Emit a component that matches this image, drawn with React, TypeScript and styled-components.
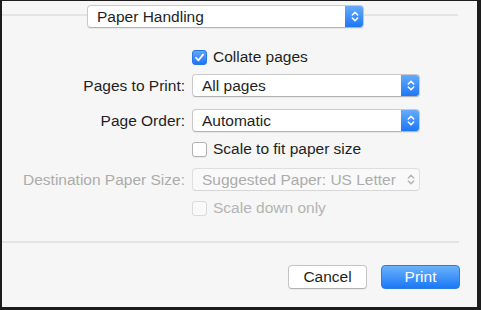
import React from "react";
import styled, { createGlobalStyle, css } from "styled-components";

const GlobalStyle = createGlobalStyle`
  html, body { margin: 0; padding: 0; background: #f6f6f6; }
  body { font-family: "Liberation Sans", Arial, sans-serif; }
`;

const Frame = styled.div`
  width: 481px;
  height: 310px;
  box-sizing: border-box;
  border-style: solid;
  border-color: #1c1c1c;
  border-width: 1px 4px 3px 2px;
  background: #f6f6f6;
  display: flex;
  flex-direction: column;
  font-size: 15.5px;
  color: #1f1f1f;
  overflow: hidden;
`;

const Header = styled.div`
  display: flex;
  align-items: flex-start;
  margin-top: 4px;
  padding-right: 19px;
  height: 23px;
`;

const HeaderRule = styled.div<{ $w?: number }>`
  height: 2px;
  margin-top: 9px;
  background: #e4e4e4;
  ${(p) => (p.$w ? css`width: ${p.$w}px;` : css`flex: 1;`)}
`;

const PopupBox = styled.div<{ $w: number; $disabled?: boolean }>`
  width: ${(p) => p.$w}px;
  height: 23px;
  box-sizing: border-box;
  display: flex;
  align-items: stretch;
  border-radius: 4px;
  border: 1px solid ${(p) => (p.$disabled ? "#dedede" : "#c9c9c9")};
  border-bottom-color: ${(p) => (p.$disabled ? "#d6d6d6" : "#b3b3b3")};
  background: ${(p) => (p.$disabled ? "#f9f9f9" : "#ffffff")};
  box-shadow: ${(p) => (p.$disabled ? "none" : "0 1px 1px rgba(0,0,0,0.06)")};
  color: ${(p) => (p.$disabled ? "#acacac" : "#1f1f1f")};
  overflow: hidden;
`;

const PopupText = styled.span`
  flex: 1;
  display: flex;
  align-items: center;
  padding-left: 9px;
  white-space: nowrap;
  line-height: 1;
`;

const Stepper = styled.span<{ $disabled?: boolean }>`
  width: 19px;
  margin: -1px -1px -1px 0;
  display: flex;
  align-items: center;
  justify-content: center;
  border-radius: 0 4px 4px 0;
  ${(p) =>
    p.$disabled
      ? css`
          background: transparent;
        `
      : css`
          background: linear-gradient(#68aefb, #1a74f6);
        `}
`;

const Chevrons = ({ color }: { color: string }) => (
  <svg width="8" height="13" viewBox="0 0 8 13" fill="none">
    <path d="M1.3 5 L4 2.2 L6.7 5" stroke={color} strokeWidth="1.5" strokeLinecap="round" strokeLinejoin="round" />
    <path d="M1.3 8 L4 10.8 L6.7 8" stroke={color} strokeWidth="1.5" strokeLinecap="round" strokeLinejoin="round" />
  </svg>
);

const Popup = ({ w, children, disabled }: { w: number; children: React.ReactNode; disabled?: boolean }) => (
  <PopupBox $w={w} $disabled={disabled}>
    <PopupText>{children}</PopupText>
    <Stepper $disabled={disabled}>
      <Chevrons color={disabled ? "#b5b5b5" : "#ffffff"} />
    </Stepper>
  </PopupBox>
);

const Form = styled.div`
  display: grid;
  grid-template-columns: 183px 228px;
  column-gap: 7px;
  align-items: center;
`;

const Label = styled.div<{ $mt: number; $disabled?: boolean }>`
  grid-column: 1;
  margin-top: ${(p) => p.$mt}px;
  text-align: right;
  white-space: nowrap;
  color: ${(p) => (p.$disabled ? "#acacac" : "#1f1f1f")};
`;

const Cell = styled.div<{ $mt: number }>`
  grid-column: 2;
  margin-top: ${(p) => p.$mt}px;
  display: flex;
  align-items: center;
`;

const CheckRow = styled.label<{ $disabled?: boolean }>`
  display: flex;
  align-items: center;
  gap: 6px;
  height: 16px;
  white-space: nowrap;
  color: ${(p) => (p.$disabled ? "#b4b4b4" : "#1f1f1f")};
`;

const Box = styled.span<{ $checked?: boolean; $disabled?: boolean }>`
  width: 15px;
  height: 15px;
  box-sizing: border-box;
  border-radius: 3px;
  display: flex;
  align-items: center;
  justify-content: center;
  ${(p) =>
    p.$checked
      ? css`
          background: linear-gradient(#5fa8fb, #1c76f6);
          border: 1px solid #2a78e6;
        `
      : p.$disabled
      ? css`
          background: #f9f9f9;
          border: 1px solid #dadada;
        `
      : css`
          background: #ffffff;
          border: 1px solid #b2b2b2;
          box-shadow: 0 1px 0 rgba(0,0,0,0.05);
        `}
`;

const Checkbox = ({ checked, disabled, children }: { checked?: boolean; disabled?: boolean; children: React.ReactNode }) => (
  <CheckRow $disabled={disabled}>
    <Box $checked={checked} $disabled={disabled}>
      {checked && (
        <svg width="11" height="11" viewBox="0 0 11 11" fill="none">
          <path d="M2 5.8 L4.5 8.3 L9 2.6" stroke="#fff" strokeWidth="1.8" strokeLinecap="round" strokeLinejoin="round" />
        </svg>
      )}
    </Box>
    {children}
  </CheckRow>
);

const BottomRule = styled.div`
  flex: none;
  height: 2px;
  margin-top: 25px;
  margin-right: 18px;
  background: #e4e4e4;
`;

const Buttons = styled.div`
  display: flex;
  justify-content: flex-end;
  gap: 14px;
  margin-top: 22px;
  padding-right: 17px;
`;

const Button = styled.button<{ $primary?: boolean }>`
  width: 79px;
  height: 24px;
  box-sizing: border-box;
  border-radius: 4px;
  font-family: "Liberation Sans", Arial, sans-serif;
  font-size: 15.5px;
  padding: 0;
  line-height: 1;
  ${(p) =>
    p.$primary
      ? css`
          background: linear-gradient(#6ab2fb, #1b78f6);
          border: 1px solid #2a7ce8;
          color: #ffffff;
        `
      : css`
          background: #ffffff;
          border: 1px solid #c6c6c6;
          border-bottom-color: #b0b0b0;
          color: #1f1f1f;
          box-shadow: 0 1px 1px rgba(0,0,0,0.05);
        `}
`;

export default function App() {
  return (
    <>
      <GlobalStyle />
      <Frame>
        <Header>
          <HeaderRule />
          <Popup w={277}>Paper Handling</Popup>
          <HeaderRule $w={94} />
        </Header>
        <Form>
          <Cell $mt={21}>
            <Checkbox checked>Collate pages</Checkbox>
          </Cell>
          <Label $mt={9}>Pages to Print:</Label>
          <Cell $mt={9}>
            <Popup w={228}>All pages</Popup>
          </Cell>
          <Label $mt={12}>Page Order:</Label>
          <Cell $mt={12}>
            <Popup w={228}>Automatic</Popup>
          </Cell>
          <Cell $mt={9}>
            <Checkbox>Scale to fit paper size</Checkbox>
          </Cell>
          <Label $mt={11} $disabled>
            Destination Paper Size:
          </Label>
          <Cell $mt={11}>
            <Popup w={228} disabled>
              Suggested Paper: US Letter
            </Popup>
          </Cell>
          <Cell $mt={9}>
            <Checkbox disabled>Scale down only</Checkbox>
          </Cell>
        </Form>
        <BottomRule />
        <Buttons>
          <Button>Cancel</Button>
          <Button $primary>Print</Button>
        </Buttons>
      </Frame>
    </>
  );
}
